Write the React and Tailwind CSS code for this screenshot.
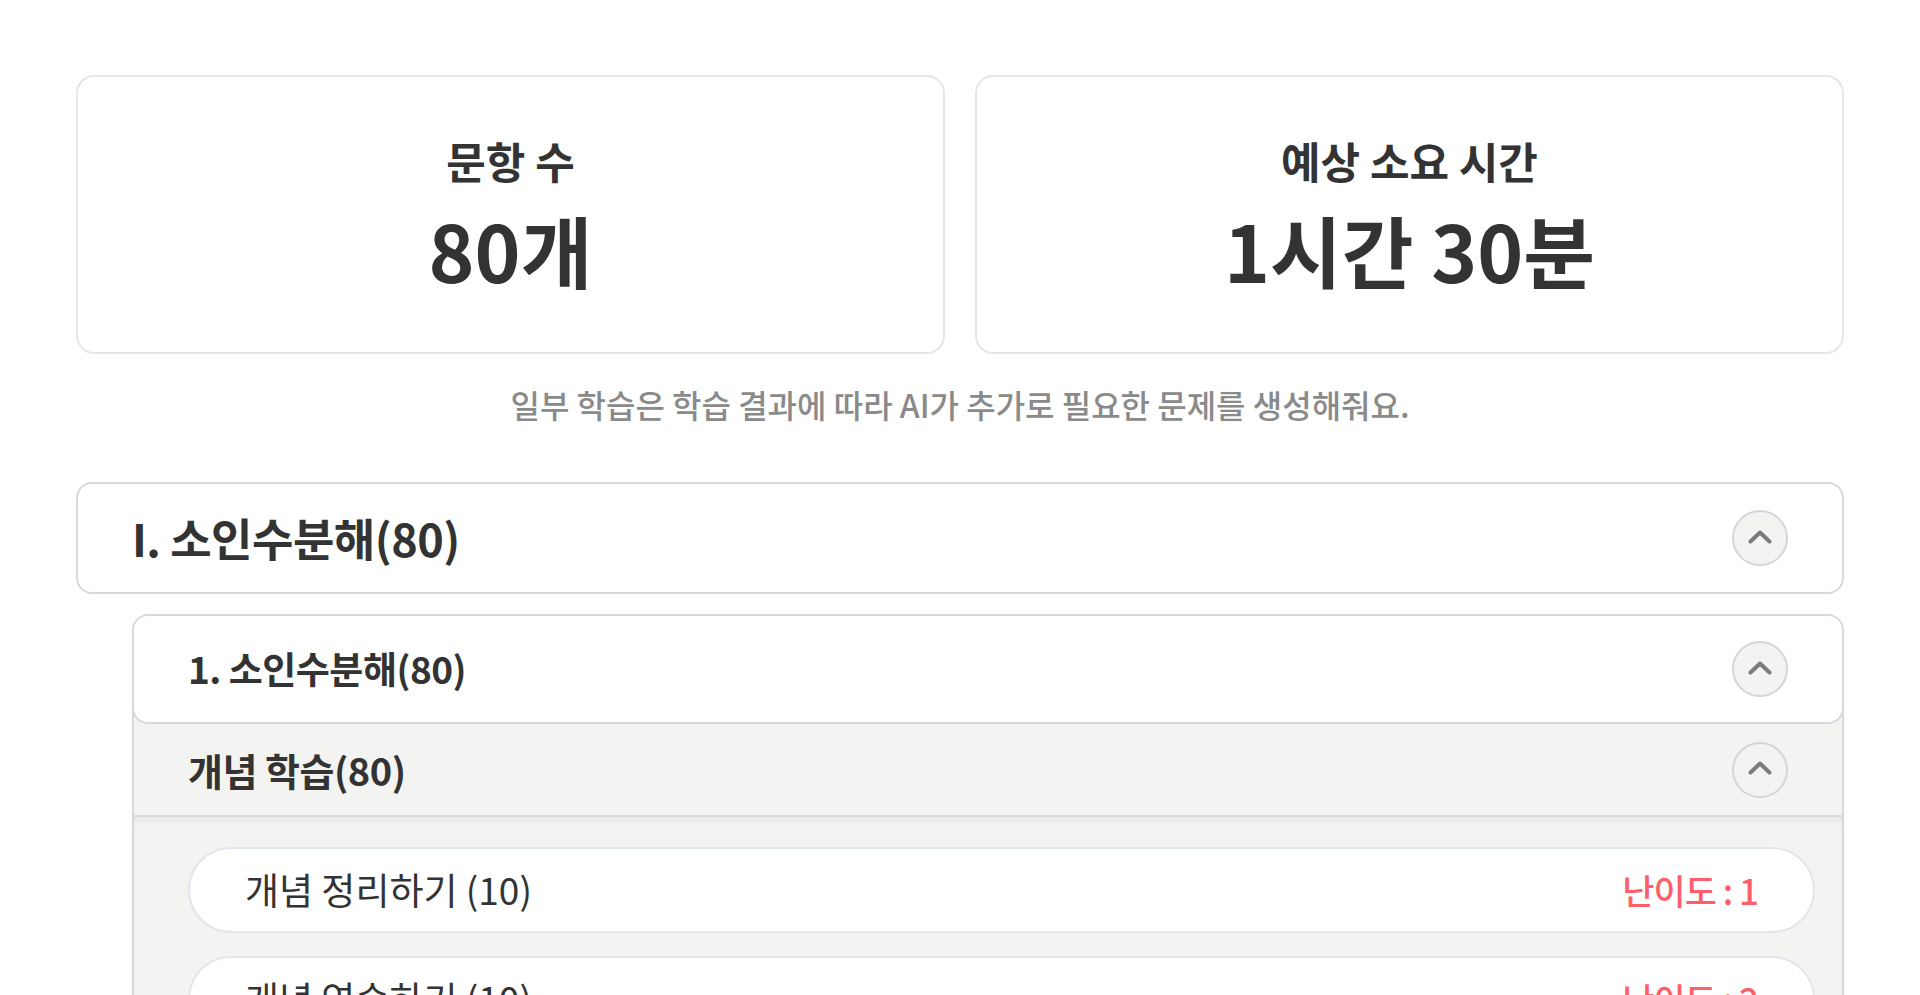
import React from "react";

function Chevron() {
  return (
    <div className="flex h-[56px] w-[56px] shrink-0 items-center justify-center rounded-full border-2 border-[#d3d6d9] bg-[#f3f3f2]">
      <svg width="24" height="14" viewBox="0 0 24 14" className="-mt-[3px]">
        <path d="M2.5 11.5 L12 2.5 L21.5 11.5" fill="none" stroke="#7b7d7d" strokeWidth="4" strokeLinecap="round" strokeLinejoin="round" />
      </svg>
    </div>
  );
}

function StatCard({ label, value }) {
  return (
    <div className="flex h-[279px] flex-col items-center justify-center gap-[18px] rounded-[18px] border-2 border-[#e3e7ec] bg-white">
      <div className="text-[43px] leading-[50px] font-bold text-[#333333]">{label}</div>
      <div className="text-[78px] leading-[92px] font-bold text-[#333333]">{value}</div>
    </div>
  );
}

function Item({ title, level }) {
  return (
    <div className="flex h-[86px] items-center justify-between rounded-full border-2 border-[#e1e6ec] bg-white pl-[55px] pr-[55px]">
      <span className="text-[37px] text-[#333333]">{title}</span>
      <span className="text-[35px] font-medium tracking-[-1px] text-[#ff5f6b]">{level}</span>
    </div>
  );
}

export default function App() {
  return (
    <div className="min-h-screen bg-white px-[76px] pt-[75px] font-['Noto_Sans_CJK_KR','Noto_Sans',sans-serif]">
      <div className="grid grid-cols-2 gap-[30px]">
        <StatCard label="문항 수" value="80개" />
        <StatCard label="예상 소요 시간" value="1시간 30분" />
      </div>

      <p className="mt-[31px] text-center text-[32px] leading-[38px] font-medium text-[#8a8a8a]">
        일부 학습은 학습 결과에 따라 AI가 추가로 필요한 문제를 생성해줘요.
      </p>

      <div className="mt-[59px] flex h-[112px] items-center justify-between rounded-[16px] border-2 border-[#d6d8db] bg-white pl-[54px] pr-[54px]">
        <span className="text-[45px] font-bold tracking-[-0.5px] text-[#333333]">I. 소인수분해(80)</span>
        <Chevron />
      </div>

      <div className="ml-[56px] mt-[20px]">
        <div className="relative z-10 flex h-[110px] items-center justify-between rounded-[16px] border-2 border-[#d6d8db] bg-white pl-[54px] pr-[54px]">
          <span className="text-[37px] font-semibold tracking-[-0.5px] text-[#333333]">1. 소인수분해(80)</span>
          <Chevron />
        </div>
        <div className="-mt-[18px] border-x-2 border-[#d6d8db] bg-[#f3f3f2] pt-[18px]">
          <div className="flex h-[93px] items-center justify-between border-b-2 border-[#d6d8db] pl-[54px] pr-[54px]">
            <span className="text-[38px] font-bold tracking-[-0.5px] text-[#333333]">개념 학습(80)</span>
            <Chevron />
          </div>
          <div className="flex flex-col gap-[23px] pb-[30px] pl-[54px] pr-[27px] pt-[30px] shadow-[inset_0_10px_12px_-8px_rgba(0,0,0,0.07)]">
            <Item title="개념 정리하기 (10)" level="난이도 : 1" />
            <Item title="개념 연습하기 (10)" level="난이도 : 2" />
            <Item title="개념 확인하기 (10)" level="난이도 : 3" />
          </div>
        </div>
      </div>
    </div>
  );
}
